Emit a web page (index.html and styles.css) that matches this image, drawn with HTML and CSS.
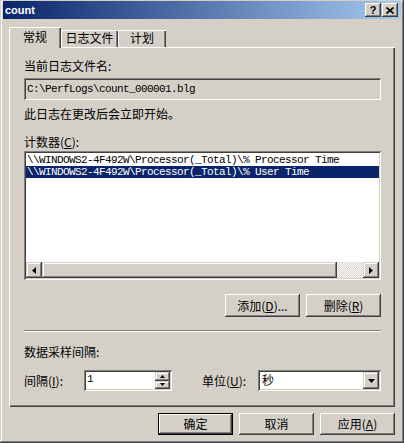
FILE: index.html
```html
<!DOCTYPE html>
<html lang="zh-CN">
<head>
<meta charset="utf-8">
<title>count</title>
<link rel="stylesheet" href="styles.css">
</head>
<body>
<div class="window">
  <div class="titlebar">
    <span class="title">count</span>
    <div class="tbtns">
      <span class="tbtn help">?</span>
      <span class="tbtn close"><svg width="8" height="7" viewBox="0 0 8 7"><path d="M0.5 0.5L7.5 6.5M7.5 0.5L0.5 6.5" stroke="#000" stroke-width="1.6" fill="none"/></svg></span>
    </div>
  </div>
  <div class="tabs">
    <div class="tab active">常规</div>
    <div class="tab t2">日志文件</div>
    <div class="tab t3">计划</div>
  </div>
  <div class="panel">
    <div class="label">当前日志文件名:</div>
    <div class="field ro"><span class="mono">C:\PerfLogs\count_000001.blg</span></div>
    <div class="label note">此日志在更改后会立即开始。</div>
    <div class="label gap14">计数器(<u>C</u>):</div>
    <div class="listbox">
      <div class="items">
        <div class="item mono">\\WINDOWS2-4F492W\Processor(_Total)\% Processor Time</div>
        <div class="item mono sel">\\WINDOWS2-4F492W\Processor(_Total)\% User Time</div>
      </div>
      <div class="hscroll">
        <div class="sbtn"><svg width="4" height="7" viewBox="0 0 4 7"><polygon points="4,0 0,3.5 4,7" fill="#000"/></svg></div>
        <div class="thumb"></div>
        <div class="track"></div>
        <div class="sbtn"><svg width="4" height="7" viewBox="0 0 4 7"><polygon points="0,0 4,3.5 0,7" fill="#000"/></svg></div>
      </div>
    </div>
    <div class="btnrow">
      <div class="btn">添加(<u>D</u>)...</div>
      <div class="btn">删除(<u>R</u>)</div>
    </div>
    <div class="sep"></div>
    <div class="label gap13">数据采样间隔:</div>
    <div class="spinrow">
      <div class="slabel">间隔(<u>I</u>):</div>
      <div class="spin">
        <span class="spinval mono">1</span>
        <div class="spinbtns">
          <div class="spbtn"><svg width="5" height="3" viewBox="0 0 5 3"><polygon points="2.5,0 5,3 0,3" fill="#000"/></svg></div>
          <div class="spbtn"><svg width="5" height="3" viewBox="0 0 5 3"><polygon points="0,0 5,0 2.5,3" fill="#000"/></svg></div>
        </div>
      </div>
      <div class="slabel unit">单位(<u>U</u>):</div>
      <div class="combo">
        <span class="comboval">秒</span>
        <div class="dropbtn"><svg width="7" height="4" viewBox="0 0 7 4"><polygon points="0,0 7,0 3.5,4" fill="#000"/></svg></div>
      </div>
    </div>
  </div>
  <div class="dlgbtns">
    <div class="btn default">确定</div>
    <div class="btn">取消</div>
    <div class="btn">应用(<u>A</u>)</div>
  </div>
</div>
</body>
</html>
```

FILE: styles.css
```css
* { box-sizing: border-box; }

body {
  margin: 0;
  background: #D4D0C8;
  font-family: "Noto Sans CJK SC", "Liberation Sans", sans-serif;
  font-size: 12px;
  color: #000;
}

.window {
  width: 404px;
  height: 443px;
  background: #D4D0C8;
  padding: 1px 3px 0 3px;
  box-shadow: inset -1px -1px #404040, inset 1px 1px #D4D0C8, inset -2px -2px #808080, inset 2px 2px #fff;
}

.titlebar {
  height: 18px;
  display: flex;
  align-items: center;
  justify-content: space-between;
  padding: 0 3px 0 2px;
  background: linear-gradient(to right, #0A246A, #A6CAF0);
}

.title {
  font-family: "Liberation Sans", sans-serif;
  font-weight: bold;
  font-size: 11px;
  color: #fff;
  line-height: 14px;
}

.tbtns {
  display: flex;
  gap: 1px;
}

.tbtn {
  width: 16px;
  height: 14px;
  display: flex;
  align-items: center;
  justify-content: center;
  background: #D4D0C8;
  box-shadow: inset -1px -1px #404040, inset 1px 1px #fff, inset -2px -2px #808080;
}

.help {
  font-family: "Liberation Sans", sans-serif;
  font-weight: bold;
  font-size: 11px;
  line-height: 11px;
  padding-top: 1px;
}

.tabs {
  display: flex;
  align-items: flex-end;
  height: 20px;
  margin: 8px 0 0 6px;
  position: relative;
  z-index: 1;
}

.tab {
  height: 17px;
  line-height: 16px;
  text-align: center;
  background: #D4D0C8;
  box-shadow: inset 1px 1px #fff, inset -1px 0 #404040, inset -2px 0 #808080;
}

.tab.active {
  width: 52px;
  height: 21px;
  margin-bottom: -1px;
  line-height: 20px;
  padding-bottom: 1px;
}

.tab.t2 { width: 57px; }
.tab.t3 { width: 48px; }

.panel {
  width: 386px;
  height: 360px;
  margin-left: 6px;
  padding: 12px 14px 0 15px;
  box-shadow: inset 1px 1px #fff, inset -1px -1px #404040, inset -2px -2px #808080;
}

.label {
  height: 14px;
  line-height: 14px;
  white-space: nowrap;
}

.note { margin-top: 7px; }
.gap14 { margin-top: 14px; }
.gap13 { margin-top: 13px; }

.mono {
  font-family: "Liberation Mono", monospace;
  font-size: 11px;
  letter-spacing: -0.6px;
  white-space: pre;
}

.field {
  margin-top: 5px;
  height: 22px;
  display: flex;
  align-items: center;
  padding-left: 3px;
  box-shadow: inset 1px 1px #808080, inset -1px -1px #fff, inset 2px 2px #404040, inset -2px -2px #D4D0C8;
}

.field.ro { background: #D4D0C8; }

.listbox {
  margin-top: 2px;
  height: 129px;
  background: #fff;
  padding: 2px;
  display: flex;
  flex-direction: column;
  box-shadow: inset 1px 1px #808080, inset -1px -1px #fff, inset 2px 2px #404040, inset -2px -2px #D4D0C8;
}

.items {
  flex: 1;
  padding-top: 1px;
}

.item {
  height: 12px;
  line-height: 12px;
  padding-left: 1px;
}

.item.sel {
  background: #0A246A;
  color: #fff;
}

.hscroll {
  height: 16px;
  display: flex;
}

.sbtn, .thumb, .spbtn, .dropbtn {
  background: #D4D0C8;
  box-shadow: inset -1px -1px #404040, inset 1px 1px #D4D0C8, inset -2px -2px #808080, inset 2px 2px #fff;
}

.sbtn {
  width: 16px;
  height: 16px;
  display: flex;
  align-items: center;
  justify-content: center;
}

.sbtn svg { display: block; }

.thumb {
  width: 295px;
}

.track {
  flex: 1;
  background: repeating-conic-gradient(#fff 0 25%, #D4D0C8 0 50%) 0 0 / 2px 2px;
}

.btnrow {
  margin-top: 14px;
  display: flex;
  justify-content: flex-end;
  gap: 6px;
}

.btn {
  width: 75px;
  height: 23px;
  display: flex;
  align-items: center;
  justify-content: center;
  background: #D4D0C8;
  line-height: 14px;
  white-space: nowrap;
  box-shadow: inset -1px -1px #404040, inset 1px 1px #fff, inset -2px -2px #808080, inset 2px 2px #D4D0C8;
}

.sep {
  margin-top: 13px;
  height: 2px;
  border-top: 1px solid #808080;
  border-bottom: 1px solid #fff;
}

.spinrow {
  margin-top: 11px;
  height: 21px;
  display: flex;
  align-items: center;
}

.slabel {
  width: 60px;
  line-height: 14px;
  white-space: nowrap;
}

.slabel.unit {
  width: 56px;
  margin-left: 30px;
}

.spin, .combo {
  height: 21px;
  background: #fff;
  display: flex;
  padding: 2px;
  box-shadow: inset 1px 1px #808080, inset -1px -1px #fff, inset 2px 2px #404040, inset -2px -2px #D4D0C8;
}

.spin { width: 88px; }

.spinval {
  flex: 1;
  padding-left: 1px;
  line-height: 15px;
}

.spinbtns {
  width: 15px;
  display: flex;
  flex-direction: column;
}

.spbtn {
  flex: 1;
  display: flex;
  align-items: center;
  justify-content: center;
}

.spbtn svg { display: block; }

.combo {
  flex: 1;
}

.comboval {
  flex: 1;
  padding-left: 2px;
  line-height: 16px;
}

.dropbtn {
  width: 16px;
  display: flex;
  align-items: center;
  justify-content: center;
}

.dropbtn svg { display: block; }

.dlgbtns {
  margin: 6px 0 0 6px;
  width: 386px;
  display: flex;
  justify-content: flex-end;
  gap: 6px;
}

.dlgbtns .btn {
  height: 22px;
}

.btn.default {
  box-shadow: inset 0 0 0 1px #000, inset -2px -2px #404040, inset 2px 2px #fff, inset -3px -3px #808080;
}
```
